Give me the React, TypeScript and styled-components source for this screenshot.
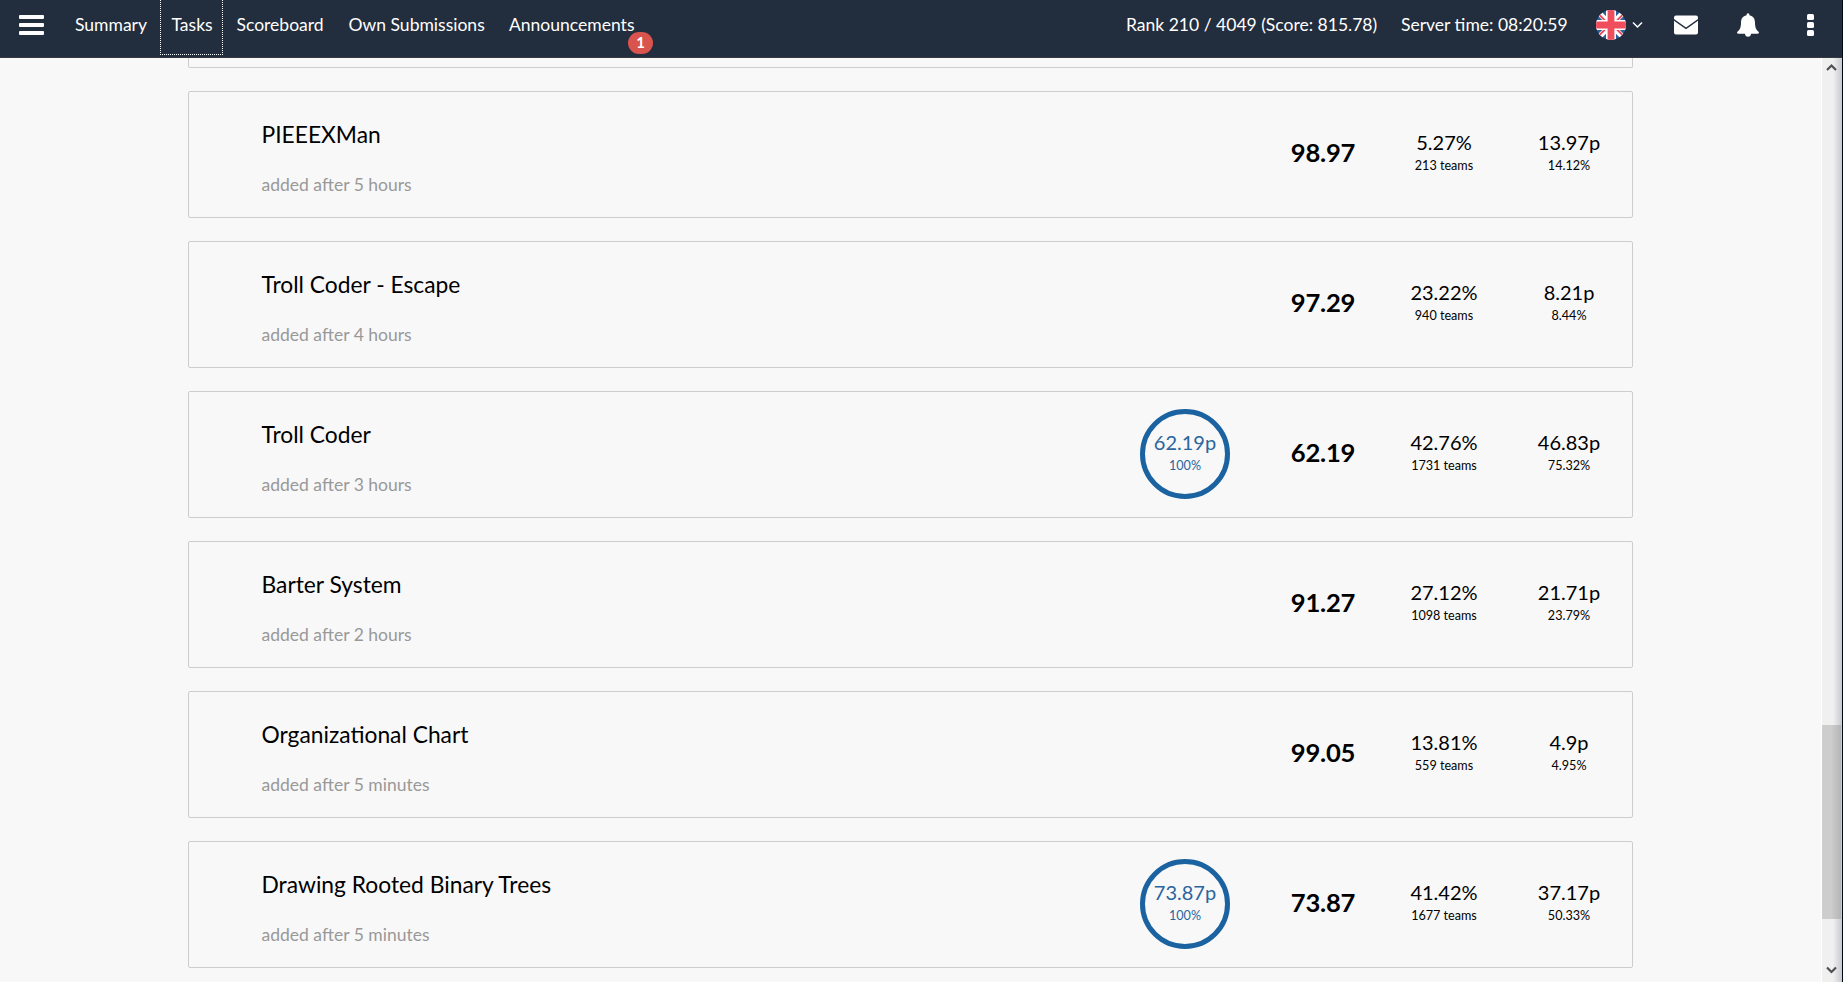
import React from 'react';
import styled, { createGlobalStyle } from 'styled-components';

const GlobalStyle = createGlobalStyle`
  * { box-sizing: border-box; }
  html, body { margin: 0; padding: 0; height: 100%; overflow: hidden; }
  body { background: #f8f8f8; font-family: Lato, "Liberation Sans", sans-serif; color: #000; }
`;

const Screen = styled.div`
  display: grid;
  grid-template-columns: 1842px 1px;
  width: 1843px;
  height: 982px;
  overflow: hidden;
`;

const WindowEdge = styled.div`
  background: #000814;
`;

const Page = styled.div`
  display: flex;
  flex-direction: column;
  height: 982px;
`;

const TopBar = styled.header`
  flex: none;
  display: flex;
  align-items: flex-start;
  height: 58px;
  background: #222d3d;
  border-bottom: 1px solid #37393d;
  color: #fff;
  font-size: 17.52px;
  line-height: 50px;
  white-space: nowrap;
`;

const MenuButton = styled.div`
  display: flex;
  flex-direction: column;
  gap: 4px;
  width: 63px;
  padding: 15px 19px 0;
`;

const MenuBar = styled.span`
  height: 4px;
  border-radius: 1px;
  background: #fff;
`;

const Nav = styled.nav`
  display: flex;
`;

const NavItem = styled.a<{ $width: number; $focused?: boolean }>`
  position: relative;
  flex: none;
  width: ${(p) => p.$width}px;
  height: 55px;
  margin-right: ${(p) => (p.$focused ? 1.5 : 0)}px;
  padding-left: ${(p) => (p.$focused ? 10.5 : 12)}px;
  border: ${(p) => (p.$focused ? '1px dotted #fff' : '0')};
  border-top: 0;
`;

const Badge = styled.span`
  position: absolute;
  top: 32px;
  left: 131px;
  width: 25px;
  height: 22px;
  border-radius: 11px;
  background: #d9534f;
  font-size: 15px;
  font-weight: 700;
  line-height: 20px;
  text-align: center;
`;

const Status = styled.div`
  display: flex;
  margin-left: auto;
`;

const StatusText = styled.span<{ $width: number }>`
  width: ${(p) => p.$width}px;
`;

const StatusIcon = styled.span<{ $width: number }>`
  display: flex;
  width: ${(p) => p.$width}px;
  height: 50px;
  align-items: center;
`;

const Body = styled.div`
  flex: 1;
  display: flex;
  min-height: 0;
`;

const TaskList = styled.main`
  flex: 1;
  display: flex;
  flex-direction: column;
  justify-content: flex-start;
  gap: 23px;
  padding-left: 188px;
  overflow: hidden;
`;

const Card = styled.article`
  flex: none;
  display: flex;
  width: 1445px;
  height: 127px;
  border: 1px solid #cccdcd;
  border-radius: 2px;
`;

const CardTail = styled(Card)`
  height: 10px;
  border-top: 0;
  border-radius: 0 0 2px 2px;
`;

const Info = styled.div`
  flex: 1;
  padding: 26px 0 0 72.5px;
`;

const Title = styled.h2`
  margin: 0;
  font-size: 22.8px;
  font-weight: 400;
  line-height: 32px;
`;

const Added = styled.p`
  margin: 22px 0 0;
  color: #999;
  font-size: 17.52px;
  line-height: 26px;
`;

const Column = styled.div<{ $width: number }>`
  display: flex;
  flex-direction: column;
  align-items: center;
  width: ${(p) => p.$width}px;
  padding-top: 38px;
`;

const RingColumn = styled.div`
  display: flex;
  justify-content: center;
  width: 158px;
  padding-top: 17px;
`;

const Ring = styled.div`
  display: flex;
  flex-direction: column;
  align-items: center;
  width: 90px;
  height: 90px;
  padding-top: 16px;
  border: 5px solid #1b62a0;
  border-radius: 50%;
  color: #2a659e;
`;

const Score = styled.div`
  width: 118px;
  padding-top: 44px;
  font-size: 25.6px;
  letter-spacing: -0.2px;
  font-weight: 700;
  line-height: 32px;
  text-align: center;
`;

const Value = styled.span`
  font-size: 20px;
  line-height: 25px;
`;

const Detail = styled.span`
  font-size: 12.6px;
  line-height: 22px;
`;

const Scrollbar = styled.aside`
  display: flex;
  flex-direction: column;
  width: 21px;
  border-left: 1px solid #fff;
  background: linear-gradient(to right, #f0f0f0 11px, #c6c9ce 20px);
`;

const Arrow = styled.svg`
  display: block;
  flex: none;
`;

const Thumb = styled.div`
  width: 19px;
  height: 194px;
  margin-top: 647px;
  margin-bottom: 41px;
  background: linear-gradient(to right, #cdcdcd 9px, #b4b5b6 19px);
`;

type Task = {
  title: string;
  added: string;
  score: string;
  share: string;
  teams: string;
  points: string;
  ratio: string;
  solved?: boolean;
};

const tasks: Task[] = [
  { title: 'PIEEEXMan', added: '5 hours', score: '98.97', share: '5.27%', teams: '213', points: '13.97p', ratio: '14.12%' },
  { title: 'Troll Coder - Escape', added: '4 hours', score: '97.29', share: '23.22%', teams: '940', points: '8.21p', ratio: '8.44%' },
  { title: 'Troll Coder', added: '3 hours', score: '62.19', share: '42.76%', teams: '1731', points: '46.83p', ratio: '75.32%', solved: true },
  { title: 'Barter System', added: '2 hours', score: '91.27', share: '27.12%', teams: '1098', points: '21.71p', ratio: '23.79%' },
  { title: 'Organizational Chart', added: '5 minutes', score: '99.05', share: '13.81%', teams: '559', points: '4.9p', ratio: '4.95%' },
  { title: 'Drawing Rooted Binary Trees', added: '5 minutes', score: '73.87', share: '41.42%', teams: '1677', points: '37.17p', ratio: '50.33%', solved: true },
];

const Flag = () => (
  <svg width="30" height="30" viewBox="0 0 30 30">
    <defs>
      <clipPath id="disc"><circle cx="15" cy="15" r="15" /></clipPath>
    </defs>
    <g clipPath="url(#disc)">
      <rect width="30" height="30" fill="#2a5f9e" />
      <path d="M0 0L30 30M30 0L0 30" stroke="#fff" strokeWidth="5.4" />
      <path d="M3 4.5L12 13.5M30 1.5L18 13.5M12 16.5L0 28.5M18 16.5L28 26.5" stroke="#ee4a5c" strokeWidth="1.8" />
      <path d="M15 0V30M0 15H30" stroke="#fff" strokeWidth="10" />
      <path d="M15 0V30M0 15H30" stroke="#f04d5d" strokeWidth="6.8" />
    </g>
  </svg>
);

const TaskCard = ({ task }: { task: Task }) => (
  <Card>
    <Info>
      <Title>{task.title}</Title>
      <Added>added after {task.added}</Added>
    </Info>
    {task.solved && (
      <RingColumn>
        <Ring>
          <Value>{task.score}p</Value>
          <Detail>100%</Detail>
        </Ring>
      </RingColumn>
    )}
    <Score>{task.score}</Score>
    <Column $width={124}>
      <Value>{task.share}</Value>
      <Detail>{task.teams} teams</Detail>
    </Column>
    <Column $width={126}>
      <Value>{task.points}</Value>
      <Detail>{task.ratio}</Detail>
    </Column>
  </Card>
);

export default function App() {
  return (
    <Screen>
      <GlobalStyle />
      <Page>
        <TopBar>
          <MenuButton><MenuBar /><MenuBar /><MenuBar /></MenuButton>
          <Nav>
            <NavItem $width={97}>Summary</NavItem>
            <NavItem $width={63} $focused>Tasks</NavItem>
            <NavItem $width={112}>Scoreboard</NavItem>
            <NavItem $width={160.5}>Own Submissions</NavItem>
            <NavItem $width={150}>Announcements<Badge>1</Badge></NavItem>
          </Nav>
          <Status>
            <StatusText $width={275}>Rank 210 / 4049 (Score: 815.78)</StatusText>
            <StatusText $width={195}>Server time: 08:20:59</StatusText>
            <StatusIcon $width={36}><Flag /></StatusIcon>
            <StatusIcon $width={42}>
              <svg width="11" height="8" viewBox="0 0 11 8"><path d="M1 1.5L5.5 6L10 1.5" fill="none" stroke="#fff" strokeWidth="1.5" /></svg>
            </StatusIcon>
            <StatusIcon $width={63}>
              <svg width="24" height="20" viewBox="0 0 24 20">
                <path d="M2 0.5H22Q24 0.5 24 2.5V4L12 12.5L0 4V2.5Q0 0.5 2 0.5Z" fill="#fff" />
                <path d="M0 5.8L12 14.3L24 5.8V17.5Q24 19.5 22 19.5H2Q0 19.5 0 17.5Z" fill="#fff" />
              </svg>
            </StatusIcon>
            <StatusIcon $width={70}>
              <svg width="22" height="24" viewBox="0 0 22 24">
                <path d="M11 0.3Q12.6 0.3 12.5 2.3C16.3 3.1 18 5.8 18 9.6C18 14.5 19.2 17.2 22 19.2Q22 20.8 20.4 20.8H14Q13.8 23.8 11 23.8Q8.2 23.8 8 20.8H1.6Q0 20.8 0 19.2C2.8 17.2 4 14.5 4 9.6C4 5.8 5.7 3.1 9.5 2.3Q9.4 0.3 11 0.3Z" fill="#fff" />
              </svg>
            </StatusIcon>
            <StatusIcon $width={35}>
              <svg width="7" height="22" viewBox="0 0 7 22" fill="#fff">
                <rect width="7" height="6" rx="1.5" /><rect y="8" width="7" height="6" rx="1.5" /><rect y="16" width="7" height="6" rx="1.5" />
              </svg>
            </StatusIcon>
          </Status>
        </TopBar>
        <Body>
          <TaskList>
            <CardTail />
            {tasks.map((task) => <TaskCard key={task.title} task={task} />)}
          </TaskList>
          <Scrollbar>
            <Arrow width="19" height="20" viewBox="0 0 19 20"><path d="M5 12L9.5 7.5L14 12" fill="none" stroke="#505050" strokeWidth="2.2" /></Arrow>
            <Thumb />
            <Arrow width="19" height="20" viewBox="0 0 19 20"><path d="M5 7.5L9.5 12L14 7.5" fill="none" stroke="#505050" strokeWidth="2.2" /></Arrow>
          </Scrollbar>
        </Body>
      </Page>
      <WindowEdge />
    </Screen>
  );
}
